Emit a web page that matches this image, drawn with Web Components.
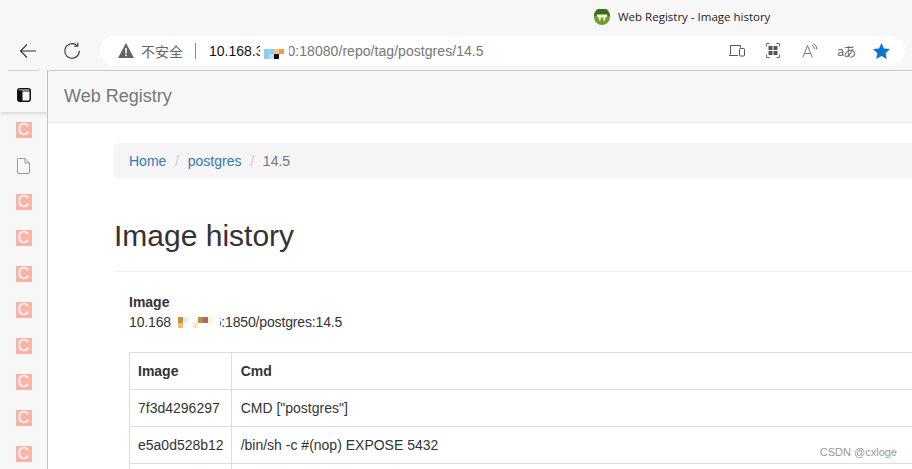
<!DOCTYPE html>
<html>
<head>
<meta charset="utf-8">
<title>Web Registry - Image history</title>
<style>
  html, body { margin: 0; height: 469px; overflow: hidden; background: #f7f7f7; }
  body { font-family: "Liberation Sans", Arial, sans-serif; }
</style>
</head>
<body>
<browser-window>
  <registry-navbar>Web Registry</registry-navbar>
  <div style="padding: 20px 0 0 66px; width: 1170px;">
    <registry-breadcrumb></registry-breadcrumb>
    <history-header>Image history</history-header>
    <history-table image="10.168."></history-table>
  </div>
  <csdn-mark>CSDN @cxloge</csdn-mark>
</browser-window>

<script>
// Top of the browser: tab title, then toolbar with the address pill
class BrowserToolbar extends HTMLElement {
  constructor() {
    super();
    this.attachShadow({ mode: 'open' });
  }

  connectedCallback() {
    this.shadowRoot.innerHTML = `
      <style>
        :host { display: block; height: 70px; background: #f7f7f7; font-family: "Liberation Sans", Arial, sans-serif; }
        .title { height: 36px; display: flex; align-items: center; padding: 0 0 3px 594px; box-sizing: border-box; gap: 8px;
          font: 11.5px "Open Sans", "Liberation Sans", sans-serif; color: #222; }
        .bar { display: flex; align-items: flex-start; height: 34px; }
        .nav { width: 44px; height: 29px; display: flex; align-items: center; justify-content: center; flex: none; }
        .pill { margin-left: 6px; width: 805px; height: 29px; background: #fff; border-radius: 15px; display: flex; align-items: center; flex: none; }
        .warn { margin-left: 18px; display: flex; }
        .cn { margin-left: 7px; font: 14px "Noto Sans CJK SC", sans-serif; color: #666; width: 43px; flex: none; }
        .sep { width: 1px; height: 16px; background: #8a8a8a; margin-left: 11px; flex: none; }
        .url { margin-left: 13px; font-size: 14px; color: #767676; white-space: nowrap; display: flex; align-items: center; letter-spacing: .05px; }
        .url b { font-weight: normal; color: #111; letter-spacing: 0; }
        .mask { display: block; position: relative; z-index: 1; width: 29px; height: 14px; margin: 0 -1px 0 -4px; background: #fff; }
        .mask i { position: absolute; display: block; }
        .tools { margin-left: auto; display: flex; align-items: center; padding-right: 15px; color: #666; }
        .tools svg { display: block; flex: none; }
        .ja { font: 13px "Noto Sans CJK JP", sans-serif; color: #666; width: 17px; letter-spacing: -1px; white-space: nowrap; margin: 0 19px; line-height: 16px; }
      </style>
      <div class="title">
        <svg width="16" height="16" viewBox="0 0 16 16"><circle cx="8" cy="8" r="8" fill="#6f9f2a"/><path d="M0 7A8 8 0 0 1 16 7Z" fill="#3f6b14"/><path d="M2.500 5.500H13.500L12.800 8H11.500L11 11.500H9.500L9.200 8.500H6.800L6.500 11.500H5L4.500 8H3.200Z" fill="#f2f6e4"/></svg>
        <span>Web Registry - Image history</span>
      </div>
      <div class="bar">
        <div class="nav" style="margin-left:6px">
          <svg width="18" height="16" viewBox="0 0 18 16" fill="none" stroke="#333" stroke-width="1.100"><path d="M17 8H1.500M8 1.500 1.500 8 8 14.500"/></svg>
        </div>
        <div class="nav">
          <svg width="18" height="18" viewBox="0 0 18 18" fill="none" stroke="#333" stroke-width="1.100"><path d="M14.200 3.800A7.300 7.300 0 1 0 16.300 9"/><path d="M14.800 .8V4.300H11.300"/></svg>
        </div>
        <div class="pill">
          <span class="warn"><svg width="16" height="15" viewBox="0 0 16 15"><path d="M8 0 16 15H0Z" fill="#666"/><rect x="7.200" y="5" width="1.600" height="5.500" fill="#fff"/><rect x="7.200" y="11.500" width="1.600" height="1.600" fill="#fff"/></svg></span>
          <span class="cn">不安全</span>
          <span class="sep"></span>
          <span class="url"><b>10.168.3</b><span class="mask">
            <i style="left:4px;top:5px;width:10px;height:10px;background:#8fcbf7"></i>
            <i style="left:9px;top:10px;width:5px;height:5px;background:#b9def8"></i>
            <i style="left:14px;top:5px;width:5px;height:5px;background:#f5c78f"></i>
            <i style="left:19px;top:5px;width:5px;height:5px;background:#e8a347"></i>
            <i style="left:14px;top:10px;width:5px;height:5px;background:#111"></i>
          </span>0:18080/repo/tag/postgres/14.5</span>
          <span class="tools">
            <svg style="margin-right:21px" width="16" height="12" viewBox="0 0 16 12" fill="none" stroke="#555"><path d="M1.500 9.500V.5H11.500V2.500"/><path d="M0 10.500H9"/><rect x="10.500" y="3.500" width="5" height="7.500" rx=".8"/></svg>
            <svg style="margin-right:22px" width="14" height="15" viewBox="0 0 14 15" fill="none" stroke="#666"><path d="M.5 3.500V1Q.5 .5 1 .5H3.500M10.500 .5H13Q13.500 .5 13.500 1V3.500M13.500 11.500V14Q13.500 14.500 13 14.500H10.500M3.500 14.500H1Q.5 14.500 .5 14V11.500"/><g fill="#555" stroke="none"><rect x="2.500" y="3" width="4" height="4"/><rect x="7.500" y="3" width="4" height="4"/><rect x="2.500" y="8" width="4" height="4"/><rect x="7.500" y="8" width="4" height="4"/></g></svg>
            <svg width="16" height="15" viewBox="0 0 16 15" fill="none" stroke="#777"><path d="M.8 14.500 5.500 2.500 10.200 14.500M2.500 10.500H8.500"/><path d="M10 2Q12.500 3.500 12.500 6M11.500 .5Q15 2.500 15 6.500"/></svg>
            <span class="ja">aあ</span>
            <svg width="17" height="16" viewBox="0 0 17 16"><path d="M8.500 0 11 5.400 17 6.100 12.600 10.200 13.800 16 8.500 13.100 3.200 16 4.400 10.200 0 6.100 6 5.400Z" fill="#0c74d0"/></svg>
          </span>
        </div>
      </div>
    `;
  }
}
customElements.define('browser-toolbar', BrowserToolbar);

// Vertical tabs on the left, one orange C favicon per tab
class TabRail extends HTMLElement {
  constructor() {
    super();
    this.attachShadow({ mode: 'open' });
  }

  connectedCallback() {
    const c = '<div class="tab"><span class="fav">C</span></div>';
    const file = `<div class="tab"><svg width="13" height="16" viewBox="0 0 13 16" fill="none" stroke="#999"><path d="M1.500 .5H8L12.500 5V14Q12.500 15.500 11 15.500H2Q.5 15.500 .5 14V1.500Q.5 .5 1.500 .5Z"/><path d="M8 .5V5H12.500"/></svg></div>`;
    this.shadowRoot.innerHTML = `
      <style>
        :host { display: block; width: 47px; flex: none; background: #f7f7f7; border-right: 1px solid #c6c6c6; }
        .head { height: 42px; padding-top: 8px; display: flex; align-items: center; justify-content: center; box-shadow: 0 2px 3px rgba(0,0,0,.12); position: relative; box-sizing: border-box; }
        .head::before { content: ""; position: absolute; left: 8px; right: 8px; top: 0; height: 1px; background: #d4d4d4; }
        .tab { height: 36px; display: flex; align-items: center; justify-content: center; }
        .fav { width: 16px; height: 16px; background: #fbb3a6; color: #fff; font: 16px/16px "Liberation Sans", sans-serif; text-align: center; display: block; }
      </style>
      <div class="head">
        <svg width="14" height="14" viewBox="0 0 14 14"><rect x=".8" y=".8" width="12.400" height="12.400" rx="2" fill="#fff" stroke="#111" stroke-width="1.500"/><path d="M1 3H13M5 3V13H3Q1 13 1 11V3Z" fill="#111" stroke="#111"/></svg>
      </div>
      <div class="list">${c}${file}${c}${c}${c}${c}${c}${c}${c}${c}</div>
    `;
  }
}
customElements.define('tab-rail', TabRail);

// Overall frame: toolbar, tab rail and the white page area
class BrowserWindow extends HTMLElement {
  constructor() {
    super();
    this.attachShadow({ mode: 'open' });
  }

  connectedCallback() {
    this.shadowRoot.innerHTML = `
      <style>
        :host { display: block; width: 912px; height: 469px; overflow: hidden; }
        .main { display: flex; height: 399px; }
        .page { flex: 1; min-width: 0; background: #fff; border-top: 1px solid #c6c6c6; border-top-left-radius: 3px;
          overflow: hidden; position: relative; color: #333; font: 14px/20px "Liberation Sans", Arial, sans-serif; }
      </style>
      <browser-toolbar></browser-toolbar>
      <div class="main">
        <tab-rail></tab-rail>
        <div class="page"><slot></slot></div>
      </div>
    `;
  }
}
customElements.define('browser-window', BrowserWindow);

class RegistryNavbar extends HTMLElement {
  constructor() {
    super();
    this.attachShadow({ mode: 'open' });
  }

  connectedCallback() {
    this.shadowRoot.innerHTML = `
      <style>
        :host { display: block; height: 51px; box-sizing: content-box; background: #f8f8f8; border-bottom: 1px solid #e7e7e7;
          padding-left: 16px; font-size: 18px; line-height: 51px; color: #777; }
      </style>
      <slot></slot>
    `;
  }
}
customElements.define('registry-navbar', RegistryNavbar);

class RegistryBreadcrumb extends HTMLElement {
  constructor() {
    super();
    this.attachShadow({ mode: 'open' });
  }

  connectedCallback() {
    this.shadowRoot.innerHTML = `
      <style>
        :host { display: block; height: 36px; box-sizing: border-box; background: #f5f5f5; border-radius: 4px; padding: 8px 15px; }
        a { color: #337ab7; text-decoration: none; }
        .s { color: #ccc; padding: 0 8.750px; }
        .cur { color: #777; }
      </style>
      <a href="#">Home</a><span class="s">/</span><a href="#">postgres</a><span class="s">/</span><span class="cur">14.5</span>
    `;
  }
}
customElements.define('registry-breadcrumb', RegistryBreadcrumb);

class HistoryHeader extends HTMLElement {
  constructor() {
    super();
    this.attachShadow({ mode: 'open' });
  }

  connectedCallback() {
    this.shadowRoot.innerHTML = `
      <style>
        :host { display: block; margin-top: 37px; padding-bottom: 15px; border-bottom: 1px solid #eee; font-size: 30px; line-height: 40px; color: #333; }
      </style>
      <slot></slot>
    `;
  }
}
customElements.define('history-header', HistoryHeader);

class HistoryTable extends HTMLElement {
  constructor() {
    super();
    this.attachShadow({ mode: 'open' });
  }

  connectedCallback() {
    const rows = [
      ['7f3d4296297', 'CMD ["postgres"]'],
      ['e5a0d528b12', '/bin/sh -c #(nop) EXPOSE 5432'],
      ['', ''],
    ];
    this.shadowRoot.innerHTML = `
      <style>
        :host { display: block; padding: 20px 15px 0; }
        .label { font-weight: bold; }
        .addr { display: flex; align-items: center; letter-spacing: -.15px; }
        .mask { display: block; position: relative; z-index: 1; width: 48px; height: 14px; margin: 0 -6px 0 -3px; background: #fff; }
        .mask i { position: absolute; display: block; }
        table { margin-top: 20px; border-collapse: collapse; width: 100%; }
        th, td { border: 1px solid #ddd; padding: 8px 8px 8px 9px; text-align: left; height: 20px; }
        th:first-child, td:first-child { width: 83px; padding: 8px 7px 8px 8px; }
      </style>
      <div class="label">Image</div>
      <div class="addr">${this.getAttribute('image')}<span class="mask">
        <i style="left:6px;top:2px;width:5px;height:6px;background:#cf8f35"></i>
        <i style="left:6px;top:8px;width:5px;height:5px;background:#f2b878"></i>
        <i style="left:11px;top:2px;width:5px;height:6px;background:#d8f3fb"></i>
        <i style="left:21px;top:8px;width:5px;height:5px;background:#fbe6c4"></i>
        <i style="left:26px;top:2px;width:5px;height:6px;background:#c98a40"></i>
        <i style="left:31px;top:2px;width:5px;height:6px;background:#a86a68"></i>
        <i style="left:36px;top:2px;width:5px;height:6px;background:#fdf3d8"></i>
      </span>6:1850/postgres:14.5</div>
      <table>
        <tr><th>Image</th><th>Cmd</th></tr>
        ${rows.map((r) => `<tr><td>${r[0]}</td><td>${r[1]}</td></tr>`).join('')}
      </table>
    `;
  }
}
customElements.define('history-table', HistoryTable);

// Watermark sits on top of the screenshot content
class CsdnMark extends HTMLElement {
  constructor() {
    super();
    this.attachShadow({ mode: 'open' });
  }

  connectedCallback() {
    this.shadowRoot.innerHTML = `
      <style>
        :host { position: absolute; right: 15px; bottom: 9px; font-size: 11px; line-height: 16px; color: #999; }
      </style>
      <slot></slot>
    `;
  }
}
customElements.define('csdn-mark', CsdnMark);
</script>
</body>
</html>
